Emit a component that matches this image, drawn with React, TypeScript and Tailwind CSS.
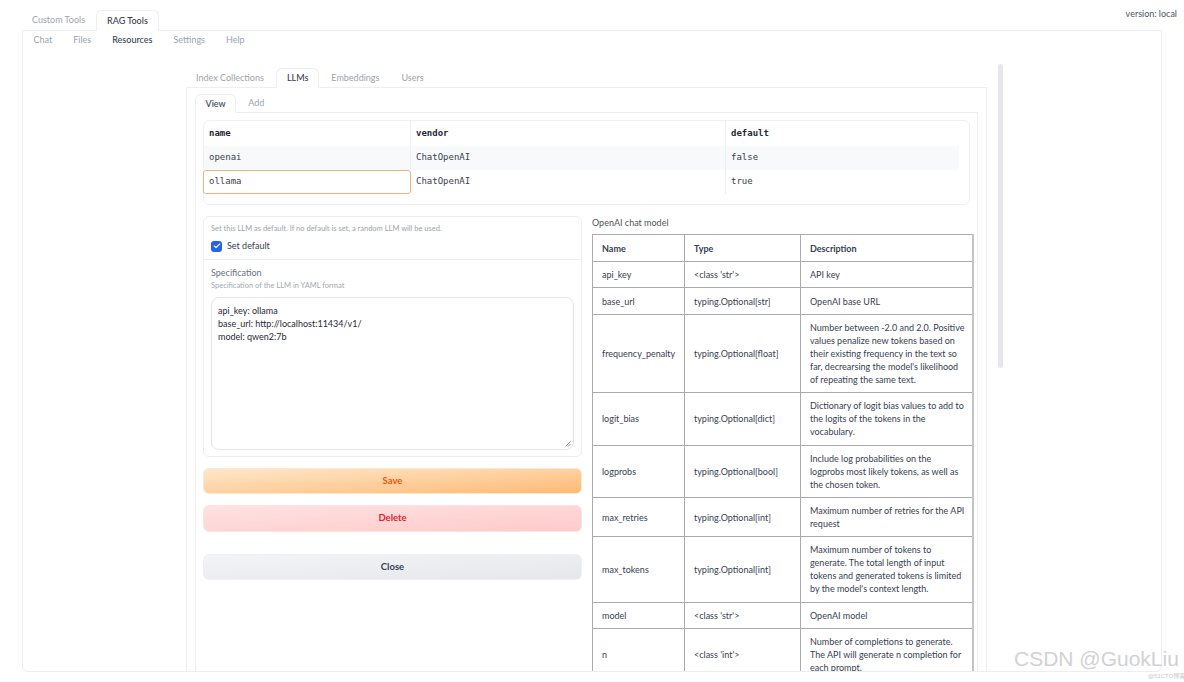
import React from 'react';
import { Check } from 'lucide-react';

type Param = { name: string; type: string; desc: string[] };

const params: Param[] = [
    { name: 'api_key', type: "<class 'str'>", desc: ['API key'] },
    { name: 'base_url', type: 'typing.Optional[str]', desc: ['OpenAI base URL'] },
    {
        name: 'frequency_penalty',
        type: 'typing.Optional[float]',
        desc: [
            'Number between -2.0 and 2.0. Positive',
            'values penalize new tokens based on',
            'their existing frequency in the text so',
            "far, decrearsing the model's likelihood",
            'of repeating the same text.',
        ],
    },
    {
        name: 'logit_bias',
        type: 'typing.Optional[dict]',
        desc: ['Dictionary of logit bias values to add to', 'the logits of the tokens in the', 'vocabulary.'],
    },
    {
        name: 'logprobs',
        type: 'typing.Optional[bool]',
        desc: ['Include log probabilities on the', 'logprobs most likely tokens, as well as', 'the chosen token.'],
    },
    {
        name: 'max_retries',
        type: 'typing.Optional[int]',
        desc: ['Maximum number of retries for the API', 'request'],
    },
    {
        name: 'max_tokens',
        type: 'typing.Optional[int]',
        desc: [
            'Maximum number of tokens to',
            'generate. The total length of input',
            'tokens and generated tokens is limited',
            "by the model's context length.",
        ],
    },
    { name: 'model', type: "<class 'str'>", desc: ['OpenAI model'] },
    {
        name: 'n',
        type: "<class 'int'>",
        desc: ['Number of completions to generate.', 'The API will generate n completion for', 'each prompt.'],
    },
];

const llms = [
    { name: 'openai', vendor: 'ChatOpenAI', def: 'false' },
    { name: 'ollama', vendor: 'ChatOpenAI', def: 'true' },
];

const App: React.FC = () => {
    return (
        <div className="relative w-[1184px] h-[682px] bg-white overflow-hidden font-['Lato',sans-serif] text-[#374151]">
            {/* Top tabs */}
            <div className="relative z-10 flex items-end h-[30px] pl-[22px] text-[9px]">
                <div className="h-[20px] px-[10px] flex items-center text-[#9ca3af]">Custom Tools</div>
                <div className="h-[21px] -mb-px ml-px px-[10px] flex items-center bg-white border border-[#eceef1] border-b-white rounded-t-md text-[#374151] font-medium">
                    RAG Tools
                </div>
            </div>
            <div className="absolute right-[7px] top-[7px] text-[9px] text-[#4b5563]">version: local</div>

            {/* Main box */}
            <div className="mx-[22px] h-[642px] border border-[#eceef1] rounded-b-md overflow-hidden">
                <div className="flex h-[17px] text-[9px] text-[#9ca3af]">
                    <div className="px-[10.5px] flex items-center">Chat</div>
                    <div className="px-[10.5px] flex items-center">Files</div>
                    <div className="px-[10.5px] flex items-center text-[#374151] font-medium">Resources</div>
                    <div className="px-[10.5px] flex items-center">Settings</div>
                    <div className="px-[10.5px] flex items-center">Help</div>
                </div>

                <div className="flex mt-[20px]">
                    <div className="ml-[163px] w-[801px]">
                        {/* LLM tabs */}
                        <div className="relative z-10 flex items-end gap-[2px] h-[19px] text-[9px] text-[#9ca3af]">
                            <div className="h-[18px] px-[10px] flex items-center">Index Collections</div>
                            <div className="h-[20px] -mb-px px-[10px] flex items-center bg-white border border-[#eceef1] border-b-white rounded-t-md text-[#374151] font-medium">
                                LLMs
                            </div>
                            <div className="h-[18px] px-[10px] flex items-center">Embeddings</div>
                            <div className="h-[18px] px-[10px] flex items-center">Users</div>
                        </div>

                        <div className="border border-[#eceef1] px-[8px] pt-[6px] h-[640px]">
                            {/* View / Add */}
                            <div className="relative z-10 flex items-end gap-[2px] h-[18px] text-[9px] text-[#9ca3af]">
                                <div className="h-[19px] -mb-px px-[9.5px] flex items-center bg-white border border-[#eceef1] border-b-white rounded-t-md text-[#374151] font-medium">
                                    View
                                </div>
                                <div className="h-[18px] px-[10px] flex items-center">Add</div>
                            </div>

                            <div className="border border-[#eceef1] px-[7px] pt-[6px] h-[600px]">
                                {/* LLM table */}
                                <div className="mt-px border border-[#eef0f2] rounded-md pr-[10px] pb-[10px] font-['DejaVu_Sans_Mono',monospace] text-[9px]">
                                    <div className="grid grid-cols-[207px_315px_235px] h-[25px] font-bold text-[#1f2937]">
                                        <div className="px-[5px] pt-px flex items-center border-r border-[#eef0f2]">name</div>
                                        <div className="px-[5px] pt-px flex items-center border-r border-[#eef0f2]">vendor</div>
                                        <div className="px-[5px] pt-px flex items-center">default</div>
                                    </div>
                                    {llms.map((r, i) => (
                                        <div
                                            key={r.name}
                                            className={
                                                i === 0
                                                    ? 'grid grid-cols-[207px_315px_235px] h-[24px] bg-[#f8f9fa] text-[#374151]'
                                                    : 'grid grid-cols-[207px_315px_235px] h-[24px] text-[#374151]'
                                            }
                                        >
                                            <div
                                                className={
                                                    i === 1
                                                        ? '-ml-px px-[5px] flex items-center border border-[#f2b27d] rounded-[3px]'
                                                        : 'px-[5px] flex items-center border-r border-[#eef0f2]'
                                                }
                                            >
                                                {r.name}
                                            </div>
                                            <div className="px-[5px] flex items-center border-r border-[#eef0f2]">{r.vendor}</div>
                                            <div className="px-[5px] flex items-center">{r.def}</div>
                                        </div>
                                    ))}
                                </div>

                                <div className="flex gap-[10px] mt-[11px]">
                                    {/* Left column */}
                                    <div className="w-[379px] shrink-0">
                                        <div className="border border-[#eceef1] rounded-md">
                                            <div className="h-[43px] px-[7px] pt-[6px] border-b border-[#eceef1]">
                                                <div className="text-[7.5px] leading-[12px] text-[#9ca3af]">
                                                    Set this LLM as default. If no default is set, a random LLM will be used.
                                                </div>
                                                <div className="flex items-center gap-[5px] mt-[5px] h-[12px]">
                                                    <div className="w-[11px] h-[11px] rounded-[3px] bg-[#2563eb] flex items-center justify-center">
                                                        <Check size={8} strokeWidth={3.5} className="text-white" />
                                                    </div>
                                                    <span className="text-[9px] text-[#374151]">Set default</span>
                                                </div>
                                            </div>
                                            <div className="px-[7px] pt-[7px] pb-[6px]">
                                                <div className="text-[9px] leading-[12px] text-[#6b7280]">Specification</div>
                                                <div className="text-[7.5px] leading-[11px] text-[#a3a8b0] mt-px">
                                                    Specification of the LLM in YAML format
                                                </div>
                                                <div className="relative mt-[6px] h-[153px] border border-[#e5e7eb] rounded-lg px-[6px] pt-[6px] text-[9px] leading-[13px] text-[#1f2937]">
                                                    <div>api_key: ollama</div>
                                                    <div>base_url: http://localhost:11434/v1/</div>
                                                    <div>model: qwen2:7b</div>
                                                    <svg className="absolute right-[2px] bottom-[2px]" width="6" height="6" viewBox="0 0 6 6">
                                                        <path d="M5.5 0.5 L0.5 5.5 M5.5 3 L3 5.5" stroke="#6b7280" strokeWidth="0.8" />
                                                    </svg>
                                                </div>
                                            </div>
                                        </div>

                                        <button className="mt-[11px] w-full h-[26px] rounded-md border border-[#fde7cf] bg-linear-to-br from-[#fee7cb] to-[#fdba74] text-[9.5px] font-bold text-[#ea580c]">
                                            Save
                                        </button>
                                        <button className="mt-[11px] w-full h-[27px] rounded-md border border-[#fde2e2] bg-linear-to-br from-[#fee2e2] to-[#fecaca] text-[9.5px] font-bold text-[#dc2626]">
                                            Delete
                                        </button>
                                        <button className="mt-[22px] w-full h-[26px] rounded-md border border-[#eef0f2] bg-linear-to-br from-[#f3f4f6] to-[#e5e7eb] text-[9.5px] font-bold text-[#374151]">
                                            Close
                                        </button>
                                    </div>

                                    {/* Right column */}
                                    <div className="w-[380px] shrink-0 pt-px">
                                        <div className="text-[9px] leading-[12px] text-[#4b5563]">OpenAI chat model</div>
                                        <table className="mt-[5px] w-[380px] table-fixed border-collapse text-[9px] leading-[13px] text-[#374151]">
                                            <colgroup>
                                                <col className="w-[92px]" />
                                                <col className="w-[116px]" />
                                                <col className="w-[172px]" />
                                            </colgroup>
                                            <thead>
                                                <tr>
                                                    <th className="border border-[#ababab] px-[9px] py-[6.5px] text-left font-bold">Name</th>
                                                    <th className="border border-[#ababab] px-[9px] py-[6.5px] text-left font-bold">Type</th>
                                                    <th className="border border-[#ababab] border-r-2 border-r-[#c4c4c4] px-[9px] py-[6.5px] text-left font-bold">
                                                        Description
                                                    </th>
                                                </tr>
                                            </thead>
                                            <tbody>
                                                {params.map((p) => (
                                                    <tr key={p.name}>
                                                        <td className="border border-[#ababab] px-[9px] py-[6.2px] whitespace-nowrap">{p.name}</td>
                                                        <td className="border border-[#ababab] px-[9px] py-[6.2px] whitespace-nowrap">{p.type}</td>
                                                        <td className="border border-[#ababab] border-r-2 border-r-[#c4c4c4] px-[9px] py-[6.2px] whitespace-nowrap">
                                                            {p.desc.map((line) => (
                                                                <div key={line}>{line}</div>
                                                            ))}
                                                        </td>
                                                    </tr>
                                                ))}
                                            </tbody>
                                        </table>
                                    </div>
                                </div>
                            </div>
                        </div>
                    </div>

                    {/* Scrollbar */}
                    <div className="ml-[11px] -mt-[4px] w-[5px] h-[304px] rounded-full bg-[#e5e7eb] self-start" />
                </div>
            </div>

            {/* Watermark */}
            <div className="absolute left-[1014px] top-[646px] text-[21px] leading-[26px] font-['Liberation_Sans',sans-serif] text-[#d2d2d2] whitespace-nowrap">
                CSDN @GuokLiu
            </div>
            <div className="absolute left-[1148px] top-[672px] text-[6px] leading-[8px] font-['Liberation_Sans','Noto_Sans_CJK_SC',sans-serif] text-[#c8c8c8] whitespace-nowrap">
                @51CTO博客
            </div>
        </div>
    );
};

export default App;
